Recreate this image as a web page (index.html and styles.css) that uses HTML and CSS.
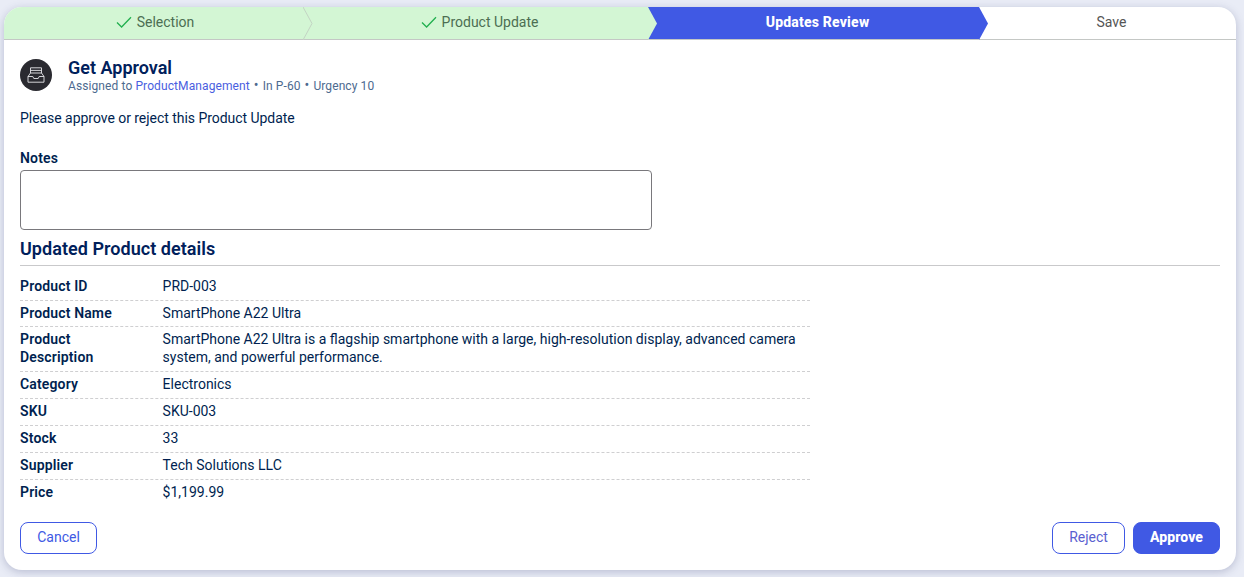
FILE: index.html
```html
<!DOCTYPE html>
<html lang="en">
<head>
<meta charset="utf-8">
<title>Get Approval</title>
<link rel="stylesheet" href="styles.css">
</head>
<body>
<main class="card">
  <nav class="stepper">
    <div class="step done first">
      <svg class="check" viewBox="0 0 16 16" width="16" height="16"><path d="M1 8.5 5.6 13 15 3.2" fill="none" stroke="#22b04f" stroke-width="1.3"/></svg>
      <span>Selection</span>
      <svg class="arrow" viewBox="0 0 10 33" width="10" height="33"><path d="M0 0 9 16.5 0 33Z" fill="#d3f6d4"/><path d="M0 0 9 16.5 0 33" fill="none" stroke="#c3d4c4"/></svg>
    </div>
    <div class="step done second">
      <svg class="check" viewBox="0 0 16 16" width="16" height="16"><path d="M1 8.5 5.6 13 15 3.2" fill="none" stroke="#22b04f" stroke-width="1.3"/></svg>
      <span>Product Update</span>
      <svg class="arrow" viewBox="0 0 10 33" width="10" height="33"><path d="M0 0 9 16.5 0 33Z" fill="#d3f6d4"/></svg>
    </div>
    <div class="step active">
      <span>Updates Review</span>
      <svg class="arrow" viewBox="0 0 10 33" width="10" height="33"><path d="M0 0 9 16.5 0 33Z" fill="#4059e4"/></svg>
    </div>
    <div class="step todo"><span>Save</span></div>
  </nav>

  <div class="body">
    <header class="task">
      <div class="avatar">
        <svg viewBox="0 0 18 16" width="18" height="16" fill="none" stroke="#e6e6ea" stroke-width=".9"><path d="M3.5 6V.8h11V6M3.5 3.4h11"/><path d="M3.5 6h11L17 9.5v5.7H1V9.5ZM1 9.5h4.8l1 2h4.4l1-2H17"/></svg>
      </div>
      <div class="task-text">
        <h1>Get Approval</h1>
        <p>Assigned to <a>ProductManagement</a><span class="dot">•</span>In P-60<span class="dot">•</span>Urgency 10</p>
      </div>
    </header>

    <p class="intro">Please approve or reject this Product Update</p>

    <label class="notes-label" for="notes">Notes</label>
    <textarea class="notes" id="notes"></textarea>

    <h2>Updated Product details</h2>

    <dl class="details">
      <div class="row"><dt>Product ID</dt><dd>PRD-003</dd></div>
      <div class="row"><dt>Product Name</dt><dd>SmartPhone A22 Ultra</dd></div>
      <div class="row"><dt>Product Description</dt><dd>SmartPhone A22 Ultra is a flagship smartphone with a large, high-resolution display, advanced camera system, and powerful performance.</dd></div>
      <div class="row"><dt>Category</dt><dd>Electronics</dd></div>
      <div class="row"><dt>SKU</dt><dd>SKU-003</dd></div>
      <div class="row"><dt>Stock</dt><dd>33</dd></div>
      <div class="row"><dt>Supplier</dt><dd>Tech Solutions LLC</dd></div>
      <div class="row"><dt>Price</dt><dd>$1,199.99</dd></div>
    </dl>

    <footer class="actions">
      <button class="btn cancel">Cancel</button>
      <div class="right">
        <button class="btn reject">Reject</button>
        <button class="btn approve">Approve</button>
      </div>
    </footer>
  </div>
</main>
</body>
</html>
```

FILE: styles.css
```css
* { box-sizing: border-box; }
html, body { height: 100%; }
body {
  margin: 0;
  padding: 7px 8px 7px 4px;
  background: #e9ecf6;
  font-family: Roboto, "Liberation Sans", sans-serif;
  font-size: 14px;
  line-height: 18px;
  color: #001f50;
  overflow: hidden;
}
.card {
  width: 1232px;
  height: 563px;
  background: #fff;
  border-radius: 18px;
  box-shadow: 0 2px 8px rgba(60, 70, 120, .28);
  overflow: hidden;
  display: flex;
  flex-direction: column;
}
.stepper {
  display: flex;
  height: 33px;
  flex: none;
  border-bottom: 1px solid #c4c7c5;
}
.step {
  position: relative;
  height: 32px;
  display: flex;
  align-items: center;
  justify-content: center;
  gap: 5px;
  padding: 0 0 2px 8px;
}
.step .arrow { position: absolute; left: 100%; top: 0; z-index: 2; }
.step.done { background: #d3f6d4; color: #4c6e52; }
.step.first { width: 299px; padding-left: 3px; z-index: 3; }
.step.second { width: 345px; z-index: 2; }
.step.active { width: 331px; background: #4059e4; color: #fff; font-weight: 800; letter-spacing: .2px; z-index: 1; }
.step.todo { flex: 1; color: #555; }
.check { flex: none; }

.body {
  flex: 1;
  display: flex;
  flex-direction: column;
  padding: 19px 16px 16px;
}
.task { display: flex; gap: 16px; align-items: flex-start; }
.avatar {
  width: 32px;
  height: 32px;
  border-radius: 50%;
  background: #2a2a30;
  display: flex;
  align-items: center;
  justify-content: center;
}
.task-text { margin-top: -2px; }
h1 { margin: 0; font-size: 18px; line-height: 22px; font-weight: 600; color: #00205b; }
.task-text p { margin: -1px 0 0; font-size: 12px; line-height: 16px; color: #4d6a8f; letter-spacing: .1px; }
.task-text a { color: #4a5ee0; }
.dot { margin: 0 4px; font-size: 14px; line-height: 14px; }
.intro { margin: 15px 0 0; letter-spacing: -.04px; }
.notes-label { display: block; margin-top: 22px; font-weight: 600; letter-spacing: .15px; }
.notes {
  display: block;
  width: 632px;
  height: 60px;
  margin: 3px 0 0;
  border: 1px solid #79787c;
  border-radius: 4px;
  resize: none;
  background: #fff;
}
h2 {
  margin: 8px 0 0;
  padding-bottom: 5px;
  font-size: 18px;
  line-height: 22px;
  font-weight: 600;
  letter-spacing: .04px;
  color: #00205b;
  border-bottom: 1px solid #c9c9cb;
}
.details { margin: 7.7px 0 0; width: 790px; line-height: 17.86px; }
.row {
  display: flex;
  padding: 4px 0;
  border-bottom: 1px dashed #cfcfd1;
}
.row:last-child { border-bottom: 0; }
dt { width: 142.6px; flex: none; font-weight: 600; letter-spacing: .15px; padding-right: 20px; }
dd { margin: 0; flex: 1; }
.actions {
  margin-top: auto;
  display: flex;
  justify-content: space-between;
}
.right { display: flex; gap: 8px; }
.btn {
  height: 32px;
  border-radius: 8px;
  border: 1px solid #4059e4;
  background: #fff;
  color: #4059e4;
  font: 400 14px/18px Roboto, "Liberation Sans", sans-serif;
  padding: 0 0 2px;
}
.cancel { width: 77px; }
.reject { width: 73px; color: #5a5fd0; }
.approve { width: 87px; background: #4059e4; color: #fff; font-weight: 800; letter-spacing: .1px; }
```
